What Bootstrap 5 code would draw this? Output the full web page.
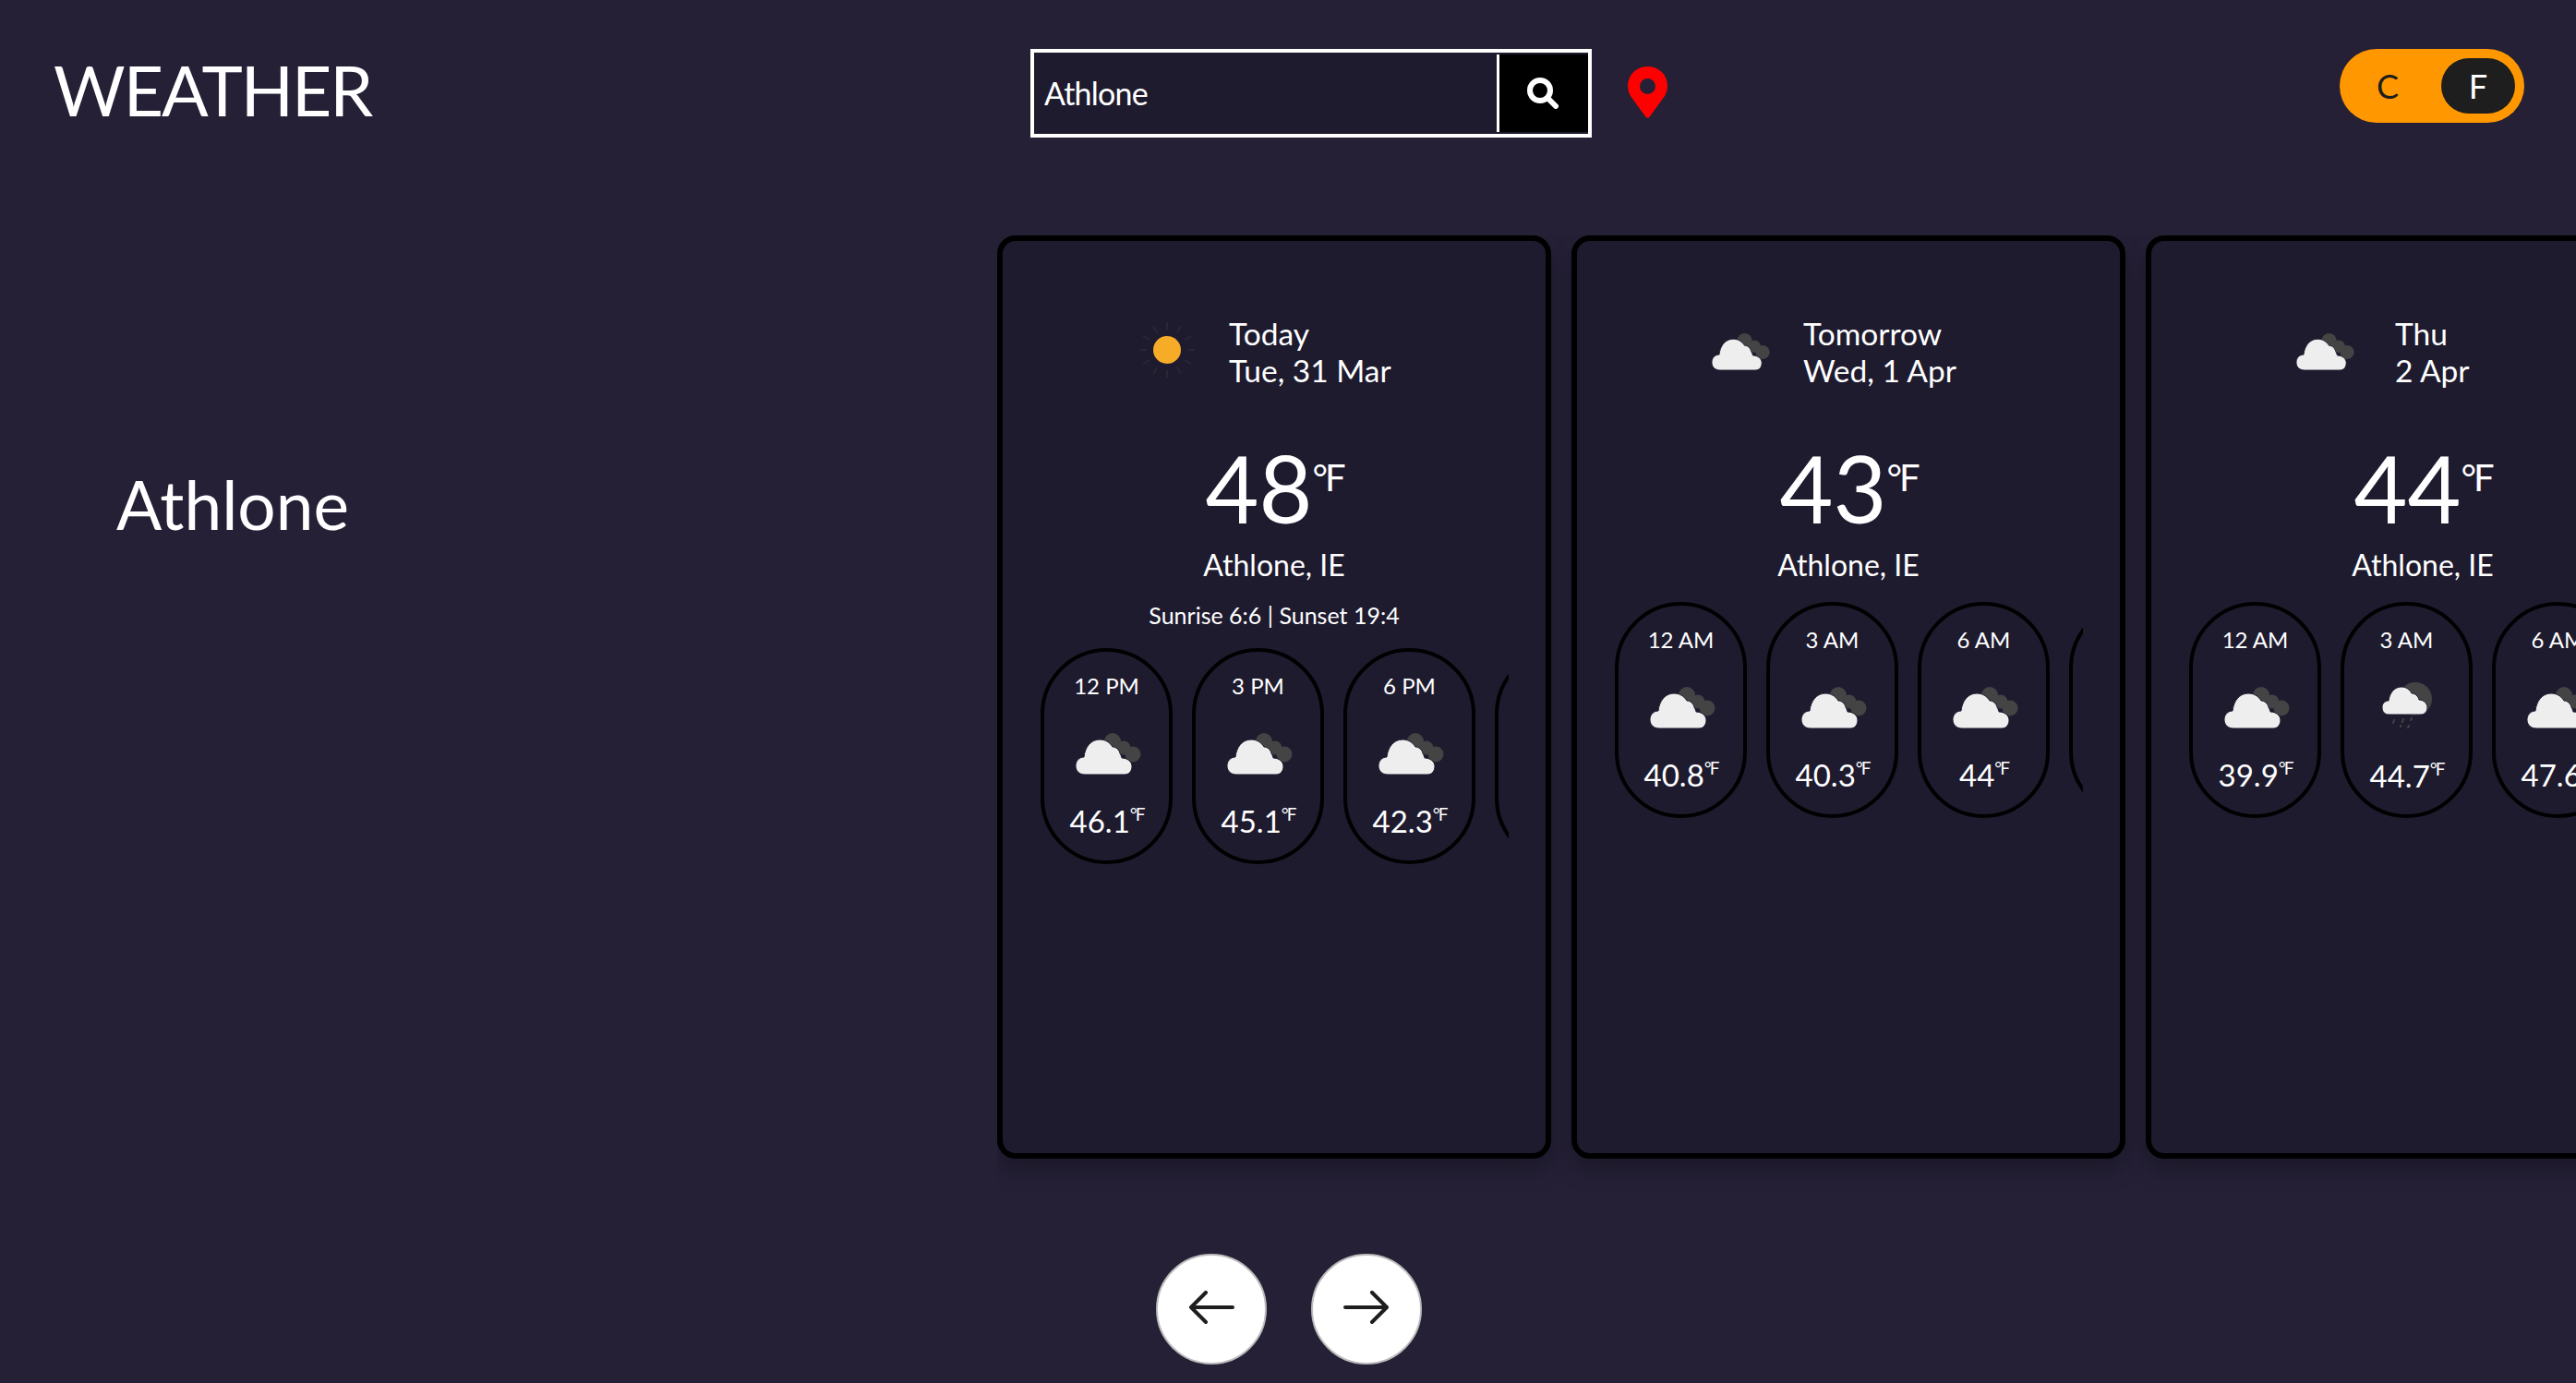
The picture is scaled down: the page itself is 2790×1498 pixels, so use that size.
<!DOCTYPE html>
<html lang="en">
<head>
  <meta charset="UTF-8" />
  <meta name="viewport" content="width=device-width, initial-scale=1.0"/>
  <title>Weather</title>
  <link href="https://cdn.jsdelivr.net/npm/bootstrap@5.3.0/dist/css/bootstrap.min.css" rel="stylesheet"/>
  <script src="https://cdn.jsdelivr.net/npm/bootstrap@5.3.0/dist/js/bootstrap.bundle.min.js"></script>
  <style>
    html, body {
      height: 100%;
    }
    body {
      background-color: #252036;
      color: #fff;
      font-family: "Lato", "Liberation Sans", sans-serif;
      overflow: hidden;
    }
    .top-strip {
      height: 255px;
      flex: none;
      padding-top: 53px;
    }
    .brand-box {
      width: 1116px;
      padding-left: 58px;
    }
    .brand-name {
      font-size: 75px;
      line-height: 88px;
      letter-spacing: -2px;
      margin: 0;
    }
    .search-box {
      width: 608px;
      height: 96px;
      border: 4px solid #fff;
      background-color: #1e1b2f;
    }
    .search-box .form-control {
      background: transparent;
      border: 0;
      border-radius: 0;
      color: #fff;
      font-size: 34px;
      letter-spacing: -.8px;
      padding: 0 11px 2px;
      box-shadow: none;
    }
    .search-btn {
      width: 99px;
      margin: 2px 0;
      background-color: #000;
      border: 0;
      border-left: 3px solid #fff;
      border-radius: 0;
      padding: 0 2px 0 0;
    }
    .search-btn:hover {
      background-color: #000;
    }
    .pin-icon {
      margin: 19px 0 0 39px;
    }
    .unit-switch {
      width: 200px;
      height: 80px;
      margin-left: auto;
      margin-right: 56px;
      background-color: #ff9800;
      border-radius: 40px;
      padding: 10px;
      font-size: 36px;
    }
    .unit-off {
      width: 84px;
      color: #1e1e1e;
      text-align: center;
    }
    .unit-on {
      width: 80px;
      height: 60px;
      margin-left: auto;
      background-color: #1e1e1e;
      border-radius: 30px;
    }
    .city-box {
      width: 1080px;
      padding: 246px 0 0 126px;
      flex: none;
    }
    .city-name {
      font-size: 73px;
      line-height: 90px;
      margin: 0;
    }
    .days-strip {
      height: 1030px;
      gap: 22px;
    }
    .day-card {
      flex: 0 0 600px;
      height: 1000px;
      background-color: #1e1b2f;
      border: 6px solid #000;
      border-radius: 20px;
      box-shadow: 0 14px 24px rgba(0,0,0,.22);
      color: #fff;
    }
    .day-head {
      height: 80px;
      margin-top: 80px;
      font-size: 33.5px;
      line-height: 40px;
    }
    .day-icon {
      width: 64px;
      flex: none;
      margin: 0 35px 4px 146px;
    }
    .day-icon-small {
      margin: 0 43px 4px 157px;
    }
    .day-temp {
      font-size: 100px;
      line-height: 100px;
      margin-top: 57px;
    }
    .day-temp sup {
      font-size: 40px;
      top: -35px;
      letter-spacing: -3px;
    }
    .day-place {
      font-size: 32px;
      line-height: 40px;
      margin-top: 14px;
    }
    .day-sun {
      font-size: 25px;
      line-height: 32px;
      padding-top: 18px;
    }
    .hour-strip {
      width: 507px;
      margin: 20px 0 0 41px;
      gap: 21px;
      overflow: hidden;
    }
    .hour-pill {
      flex: 0 0 143px;
      height: 234px;
      border: 4px solid #000;
      border-radius: 72px;
      padding-top: 22px;
      font-size: 24px;
      line-height: 30px;
    }
    .hour-pill svg {
      display: block;
      margin: 36px 0 0 34px;
    }
    .hour-pill svg.rain-icon {
      margin: 31px auto 0;
    }
    .hour-temp {
      font-size: 33px;
      line-height: 40px;
      margin-top: 30px;
    }
    .hour-pill svg.rain-icon + .hour-temp {
      margin-top: 29px;
    }
    .hour-temp sup {
      font-size: 19px;
      top: -13px;
      letter-spacing: -2px;
    }
    .arrow-btn {
      width: 120px;
      height: 120px;
      padding: 0 0 5px;
      background-color: #fff;
      border: 2px solid #bbb;
      border-radius: 50%;
    }
    .arrow-btn:hover {
      background-color: #fff;
      border-color: #bbb;
    }
    .arrow-row {
      margin: 73px 0 0 172px;
      gap: 48px;
    }
  </style>
</head>
<body>

  <!-- icons used several times -->
  <svg width="0" height="0" class="position-absolute">
    <symbol id="cloud" viewBox="0 0 72 45">
      <g fill="#444">
        <circle cx="40" cy="9" r="9"/>
        <circle cx="52" cy="16" r="7.5"/>
        <circle cx="62" cy="23" r="8.5"/>
      </g>
      <path d="M10 45C4 45 0 41 0 35.500C0 30 4 26 9 26C10 16 16 7 26 7C32 7 37 10 40 15C44 15 47 18 48 22C49 24 50 26 50 27C56 27 61 31 61 36C61 41 58 45 53 45Z" fill="#eee" stroke="#1e1b2f" stroke-width="1"/>
    </symbol>
    <symbol id="rain" viewBox="0 0 54 52">
      <circle cx="36" cy="18" r="18" fill="#444"/>
      <path d="M7 35C3 35 0 32 0 27C0 23 3 20 7 20C8 12 13 5 21 5C26 5 30 8 32 12C36 12 39 15 40 19C45 19 49 23 49 27C49 32 46 35 42 35Z" fill="#eee" stroke="#1e1b2f" stroke-width="1"/>
      <g stroke="#444" stroke-width="2" stroke-linecap="round">
        <path d="M13 41l-1 3M23 40l-1 3M32 39l-1 2M20 47l0 1M29 47l-1 2"/>
      </g>
    </symbol>
    <symbol id="sun" viewBox="0 0 64 64">
      <g stroke="#2a2732" stroke-width="2">
        <path d="M32 2v8M32 54v8M2 32h8M54 32h8M17 6l4 7M43 51l4 7M6 17l7 4M51 43l7 4M47 6l-4 7M21 51l-4 7M58 17l-7 4M13 43l-7 4"/>
      </g>
      <circle cx="32" cy="32" r="15" fill="#f7ac28"/>
    </symbol>
  </svg>

  <div class="d-flex flex-column h-100">
    <!-- Top bar -->
    <div class="top-strip d-flex align-items-start">
      <div class="brand-box"><h1 class="brand-name fw-normal">WEATHER</h1></div>
      <div class="search-box input-group flex-nowrap">
        <input class="form-control" type="text" value="Athlone" aria-label="City"/>
        <button class="btn search-btn" type="button" aria-label="Search">
          <svg width="34" height="34" viewBox="0 0 34 34" fill="none" stroke="#fff" stroke-width="6" stroke-linecap="round"><circle cx="14" cy="14" r="11"/><path d="M23 23l8 8"/></svg>
        </button>
      </div>
      <svg class="pin-icon" width="43" height="56" viewBox="0 0 43 56"><path fill="#f00" fill-rule="evenodd" d="M21.500 0C33.500 0 43 9 43 21C43 25 42 28 40 32L24 54C23 56 20 56 19 54L3 32C1 28 0 25 0 21C0 9 9.500 0 21.500 0ZM21.500 13A8.500 8.500 0 1 0 21.500 30A8.500 8.500 0 1 0 21.500 13Z"/></svg>
      <div class="unit-switch d-flex align-items-center">
        <span class="unit-off">C</span>
        <span class="unit-on d-flex align-items-center justify-content-center">F</span>
      </div>
    </div>

    <!-- Main -->
    <div class="d-flex flex-grow-1">
      <div class="city-box"><h2 class="city-name fw-normal">Athlone</h2></div>
      <div class="flex-grow-1 overflow-hidden">
        <div class="days-strip d-flex" id="daysStrip"></div>
        <div class="arrow-row d-flex">
          <button class="btn arrow-btn" type="button" aria-label="Previous">
            <svg width="50" height="36" viewBox="0 0 50 36" fill="none" stroke="#1e1e1e" stroke-width="4" stroke-linecap="round" stroke-linejoin="round"><path d="M48 18H3M19 2L3 18L19 34"/></svg>
          </button>
          <button class="btn arrow-btn" type="button" aria-label="Next">
            <svg width="50" height="36" viewBox="0 0 50 36" fill="none" stroke="#1e1e1e" stroke-width="4" stroke-linecap="round" stroke-linejoin="round"><path d="M2 18H47M31 2L47 18L31 34"/></svg>
          </button>
        </div>
      </div>
    </div>
  </div>

  <!-- JavaScript -->
  <script>
    const days = [
      { icon: 'sun', label: 'Today', date: 'Tue, 31 Mar', temp: '48', sun: 'Sunrise 6:6 | Sunset 19:4',
        hours: [['12 PM', '46.1'], ['3 PM', '45.1'], ['6 PM', '42.3'], []] },
      { icon: 'cloud', label: 'Tomorrow', date: 'Wed, 1 Apr', temp: '43',
        hours: [['12 AM', '40.8'], ['3 AM', '40.3'], ['6 AM', '44'], []] },
      { icon: 'cloud', small: true, label: 'Thu', date: '2 Apr', temp: '44',
        hours: [['12 AM', '39.9'], ['3 AM', '44.7', 'rain'], ['6 AM', '47.6']] }
    ];

    document.getElementById('daysStrip').innerHTML = days.map(day => {
      const pills = day.hours.map(h => {
        // the fourth pill only peeks in at the edge of the strip
        if (!h.length) return '<div class="hour-pill"></div>';
        return `
        <div class="hour-pill text-center">
          <div>${h[0]}</div>
          ${h[2] === 'rain'
            ? '<svg class="rain-icon" width="54" height="52"><use href="#rain"/></svg>'
            : '<svg width="72" height="45"><use href="#cloud"/></svg>'}
          <div class="hour-temp">${h[1]}<sup>°F</sup></div>
        </div>`;
      }).join('');
      return `
        <div class="day-card card">
          <div class="day-head d-flex align-items-center">
            <div class="day-icon ${day.small ? 'day-icon-small' : ''} text-center"><svg width="64" height="${day.icon === 'sun' ? 64 : 40}"><use href="#${day.icon}"/></svg></div>
            <div>${day.label}<br>${day.date}</div>
          </div>
          <div class="day-temp text-center">${day.temp}<sup>°F</sup></div>
          <div class="day-place text-center">Athlone, IE</div>
          ${day.sun ? `<div class="day-sun text-center">${day.sun}</div>` : ''}
          <div class="hour-strip d-flex">${pills}</div>
        </div>`;
    }).join('');
  </script>

</body>
</html>
